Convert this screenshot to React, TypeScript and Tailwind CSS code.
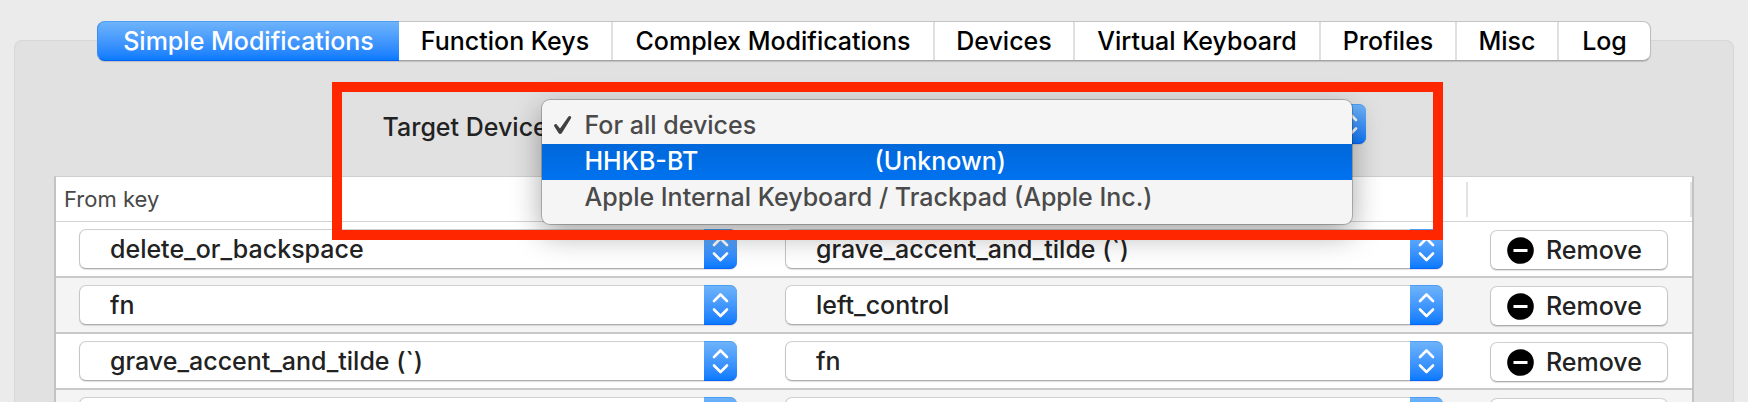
import React from "react";

const tabs = [
  "Simple Modifications",
  "Function Keys",
  "Complex Modifications",
  "Devices",
  "Virtual Keyboard",
  "Profiles",
  "Misc",
  "Log",
];

const keys = [
  "delete_or_backspace",
  "fn",
  "grave_accent_and_tilde (`)",
  "left_control",
];

const rows = [
  { from: keys[0], to: keys[2] },
  { from: keys[1], to: keys[3] },
  { from: keys[2], to: keys[1] },
  { from: keys[3], to: keys[0] },
];

const columns = [
  { title: "From key", label: "From key" },
  { title: "", label: "To key" },
  { title: "", label: "Actions" },
];

const devices = [
  { name: "For all devices", vendor: "", checked: true, active: false },
  { name: "HHKB-BT", vendor: "(Unknown)", checked: false, active: true },
  {
    name: "Apple Internal Keyboard / Trackpad (Apple Inc.)",
    vendor: "",
    checked: false,
    active: false,
  },
];

function Popup({
  label,
  value,
  options,
  id,
}: {
  label?: string;
  value: string;
  options: string[];
  id?: string;
}) {
  return (
    <div className="relative h-10 w-full">
      <select
        id={id}
        aria-label={label}
        defaultValue={value}
        className="block h-10 w-full appearance-none rounded-[7px] border border-t-[#cfcfcf] border-r-[#c6c6c6] border-b-[#adadad] border-l-[#c6c6c6] bg-white pr-10 pl-[30px] text-[#222] shadow-[0_1px_1px_rgba(0,0,0,0.12)] outline-none"
      >
        {options.map((o) => (
          <option key={o}>{o}</option>
        ))}
      </select>
      <span className="pointer-events-none absolute inset-y-0 right-0 flex w-[33px] items-center justify-center rounded-r-[7px] border-t border-b border-t-[#4a9ef5] border-b-[#0a62fb] bg-linear-to-b from-[#6db3fa] to-[#067aff]">
        <svg width="17" height="26" viewBox="0 0 17 26" fill="none" stroke="white" strokeWidth="2.6" strokeLinecap="round" strokeLinejoin="round">
          <path d="M2 9 8.5 2.500 15 9M2 17.500 8.5 24 15 17.500" />
        </svg>
      </span>
    </div>
  );
}

function DeviceMenu() {
  return (
    <div
      role="menu"
      className="absolute -top-1 right-3.5 -left-3 z-10 rounded-lg bg-[#f5f5f5] py-2 shadow-[0_0_0_1px_rgba(0,0,0,0.22),0_10px_30px_rgba(0,0,0,0.36)]"
    >
      {devices.map((d) => (
        <button
          key={d.name}
          type="button"
          role="menuitemradio"
          aria-checked={d.checked}
          className={
            d.active
              ? "flex h-9 w-full items-center bg-linear-to-b from-[#0068d9] to-[#0072f0] pb-0.5 text-left font-medium whitespace-nowrap text-white"
              : "flex h-9 w-full items-center pb-0.5 text-left font-medium whitespace-nowrap text-[#4a4a4a]"
          }
        >
          <span className="flex w-[43px] shrink-0 pl-[11px]">
            {d.checked && (
              <svg width="19" height="20" viewBox="0 0 19 20" fill="#404040">
                <path d="M1.2 11.2C.4 10 2.6 8.300 3.700 9.500L7 13.600 15.300 1.700C16.200.3 19 1.400 18 3.200L8.900 18C8.100 19.300 6.300 19.300 5.500 18Z" />
              </svg>
            )}
          </span>
          <span className={d.vendor ? "w-[290px]" : ""}>{d.name}</span>
          {d.vendor && <span>{d.vendor}</span>}
        </button>
      ))}
    </div>
  );
}

export default function App() {
  return (
    <div className="relative flex h-screen flex-col overflow-hidden bg-[#ebebeb] pt-[21px] font-['Inter','Liberation_Sans',sans-serif] text-[25px] leading-8 font-[450]">
      <div
        role="tablist"
        className="z-10 mx-[97px] grid h-10 shrink-0 grid-cols-[301fr_214fr_322fr_140fr_246fr_136fr_102fr_91fr] rounded-lg border border-t-[#c4c4c4] border-r-[#bdbdbd] border-b-[#a3a3a3] border-l-[#bdbdbd] bg-white shadow-[0_1px_1px_rgba(0,0,0,0.15)]"
      >
        {tabs.map((t, i) => (
          <button
            key={t}
            type="button"
            role="tab"
            aria-selected={i === 0}
            className={
              i === 0
                ? "-my-px -ml-px rounded-l-lg border border-r-0 border-t-[#4d9ff5] border-b-[#0660f5] border-l-[#3b8df3] bg-linear-to-b from-[#6db3fa] to-[#067aff] whitespace-nowrap text-white"
                : "border-r-2 border-[#e0e0e0] whitespace-nowrap text-black last:border-r-0"
            }
          >
            {t}
          </button>
        ))}
      </div>

      <main className="mx-3.5 -mt-[21px] min-h-0 grow rounded-t-lg border border-b-0 border-[#d7d7d7] bg-[#e1e1e1] px-[39px] pt-[63px]">
        <div className="flex justify-center">
          <label htmlFor="target-device" className="w-[171px] shrink-0 pt-[7px] whitespace-nowrap text-[#222]">
            Target Device:
          </label>
          <div className="relative w-[812px]">
            <Popup id="target-device" value={devices[0].name} options={devices.map((d) => d.name)} />
            <DeviceMenu />
          </div>
        </div>

        <div className="mt-8 border-x-2 border-t border-x-[#c3c3c3] border-t-[#cfcfcf] bg-white">
          <table className="w-full table-fixed border-separate border-spacing-0">
            <colgroup>
              <col />
              <col />
              <col className="w-[224px]" />
            </colgroup>
            <thead>
              <tr className="text-left text-[22px] text-[#484848]">
                {columns.map((c) => (
                  <th key={c.label} scope="col" aria-label={c.label} className="h-[45px] border-b border-[#d2d2d2] p-0 font-normal">
                    <div className="flex h-[35px] items-center border-r-2 border-[#e3e3e3] pl-2">{c.title}</div>
                  </th>
                ))}
              </tr>
            </thead>
            <tbody>
              {rows.map((r) => (
                <tr key={r.from} className="even:bg-[#f4f4f4]">
                  <td className="h-14 border-b-2 border-[#c9c9c9] p-0 pr-[25px] pl-[23px]">
                    <Popup label="From key" value={r.from} options={keys} />
                  </td>
                  <td className="border-b-2 border-[#c9c9c9] p-0 pr-[25px] pl-[23px]">
                    <Popup label="To key" value={r.to} options={keys} />
                  </td>
                  <td className="border-b-2 border-[#c9c9c9] p-0 pt-0.5 pr-6 pl-[22px]">
                    <button
                      type="button"
                      className="flex h-10 w-full items-center gap-3 rounded-[7px] border border-t-[#cfcfcf] border-r-[#c6c6c6] border-b-[#adadad] border-l-[#c6c6c6] bg-white pl-4 text-[#222] shadow-[0_1px_1px_rgba(0,0,0,0.12)]"
                    >
                      <svg width="27" height="27" viewBox="0 0 27 27">
                        <circle cx="13.5" cy="13.500" r="13.300" fill="black" />
                        <rect x="6.500" y="12" width="14" height="3" fill="white" />
                      </svg>
                      Remove
                    </button>
                  </td>
                </tr>
              ))}
            </tbody>
          </table>
        </div>
      </main>

      <div className="pointer-events-none absolute top-[82px] right-[305px] left-[332px] z-20 h-[158px] border-10 border-[#ff2600]" />
    </div>
  );
}
